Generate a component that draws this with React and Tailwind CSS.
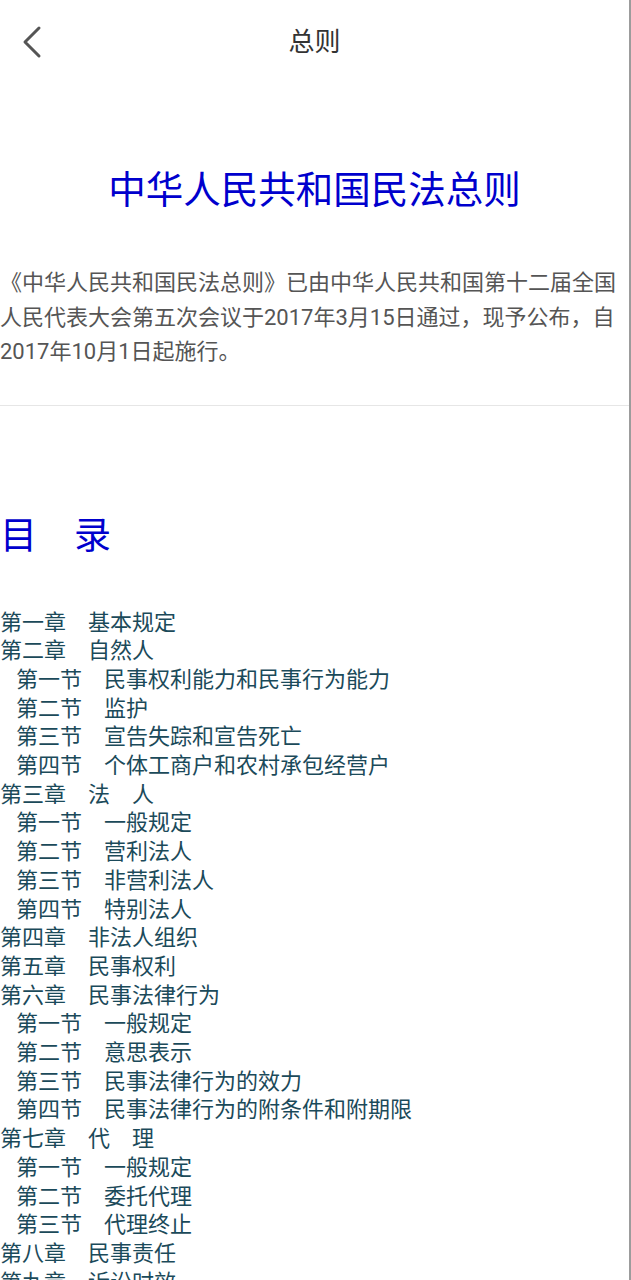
const toc = [
  { label: '第一章', title: '基本规定' },
  { label: '第二章', title: '自然人' },
  { label: '第一节', title: '民事权利能力和民事行为能力', sub: true },
  { label: '第二节', title: '监护', sub: true },
  { label: '第三节', title: '宣告失踪和宣告死亡', sub: true },
  { label: '第四节', title: '个体工商户和农村承包经营户', sub: true },
  { label: '第三章', title: '法　人' },
  { label: '第一节', title: '一般规定', sub: true },
  { label: '第二节', title: '营利法人', sub: true },
  { label: '第三节', title: '非营利法人', sub: true },
  { label: '第四节', title: '特别法人', sub: true },
  { label: '第四章', title: '非法人组织' },
  { label: '第五章', title: '民事权利' },
  { label: '第六章', title: '民事法律行为' },
  { label: '第一节', title: '一般规定', sub: true },
  { label: '第二节', title: '意思表示', sub: true },
  { label: '第三节', title: '民事法律行为的效力', sub: true },
  { label: '第四节', title: '民事法律行为的附条件和附期限', sub: true },
  { label: '第七章', title: '代　理' },
  { label: '第一节', title: '一般规定', sub: true },
  { label: '第二节', title: '委托代理', sub: true },
  { label: '第三节', title: '代理终止', sub: true },
  { label: '第八章', title: '民事责任' },
  { label: '第九章', title: '诉讼时效' },
  { label: '第十章', title: '期间计算' },
  { label: '第十一章', title: '附　则' },
];

function BackIcon() {
  return (
    <svg width="24" height="34" viewBox="0 0 24 34" fill="none">
      <path d="M19 3 L5 17 L19 31" stroke="#555" strokeWidth="3" strokeLinecap="round" strokeLinejoin="round" />
    </svg>
  );
}

export default function App() {
  return (
    <div
      className="min-h-screen w-full border-r-2 border-[#9c9c9c] bg-white"
      style={{ fontFamily: 'Roboto, "Noto Sans CJK SC", sans-serif' }}
    >
      <header className="grid h-[84px] grid-cols-[84px_1fr_84px] items-center">
        <button type="button" className="flex items-center pl-[20px]">
          <BackIcon />
        </button>
        <h1 className="text-center text-[26px] text-[#333]">总则</h1>
        <div />
      </header>

      <h2 className="mt-[80px] text-center text-[37.5px] leading-[52px] text-[#0000cd]">
        中华人民共和国民法总则
      </h2>

      <p className="mt-[50px] pb-[35px] text-[22px] leading-[34.5px] text-[#555]">
        《中华人民共和国民法总则》已由中华人民共和国第十二届全国
        <br />
        人民代表大会第五次会议于2017年3月15日通过，现予公布，自
        <br />
        2017年10月1日起施行。
      </p>

      <div className="h-px bg-[#e6e6e6]" />

      <h2 className="mt-[105px] text-[37px] leading-[52px] text-[#0000cd]">目　录</h2>

      <ul className="mt-[46px] pb-10 text-[22px] leading-[28.7px] text-[#1b4a5a]">
        {toc.map((item, i) => (
          <li key={i} className={item.sub ? 'pl-[16px]' : ''}>
            {item.label}　{item.title}
          </li>
        ))}
      </ul>
    </div>
  );
}
